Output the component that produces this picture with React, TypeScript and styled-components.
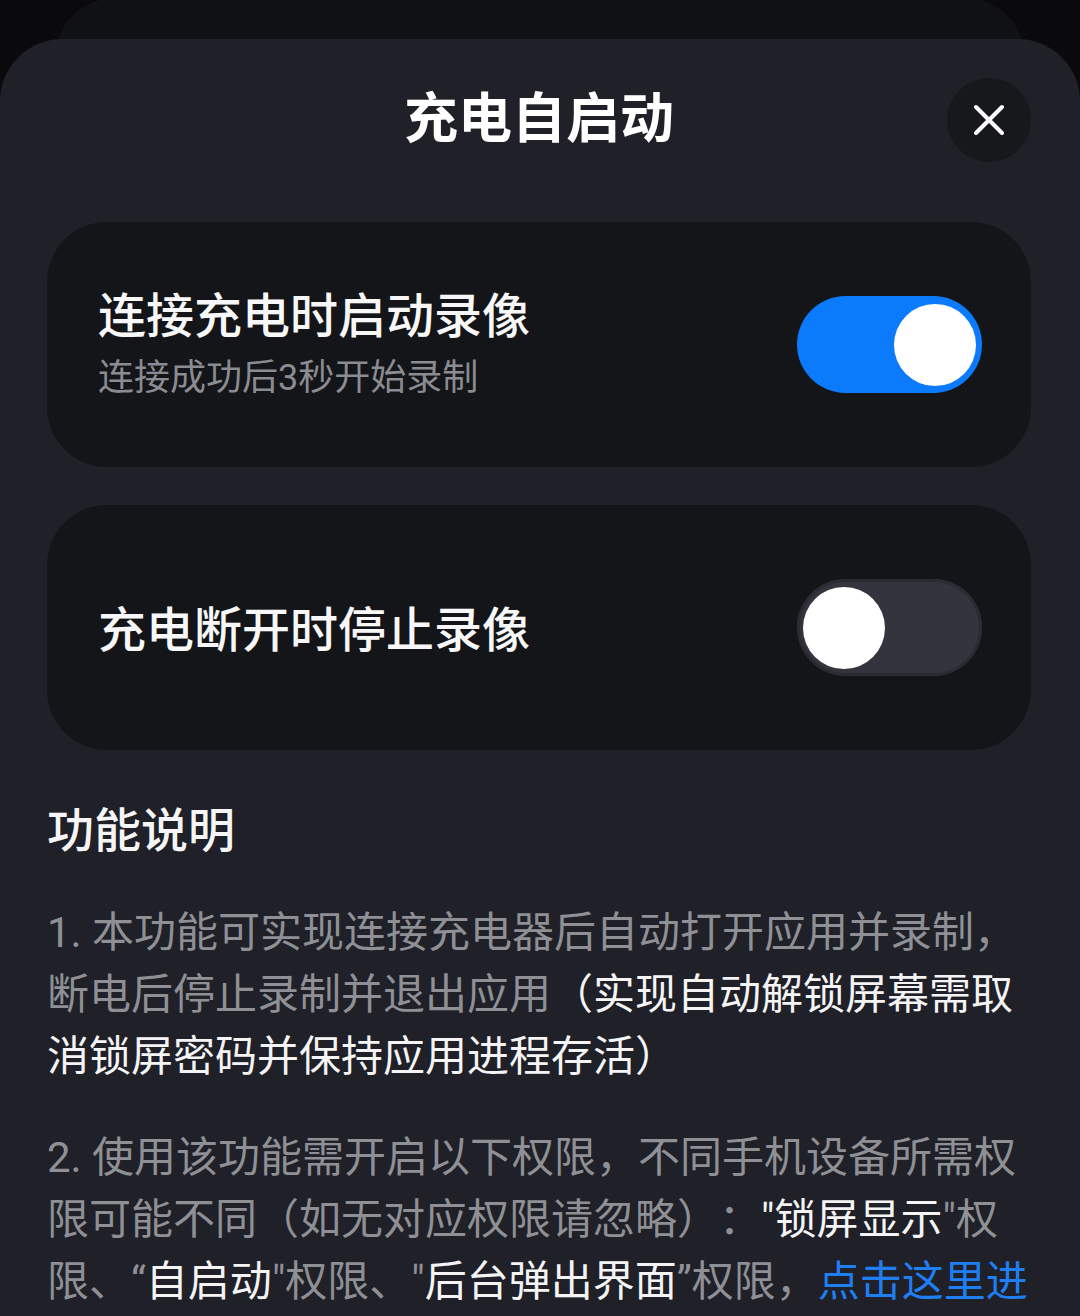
import React, { useState } from "react";
import styled, { createGlobalStyle } from "styled-components";

const GlobalStyle = createGlobalStyle`
  html, body {
    margin: 0;
    padding: 0;
    background: #0a0a0d;
  }
  body {
    font-family: Roboto, "Noto Sans CJK SC", sans-serif;
    -webkit-font-smoothing: antialiased;
    text-spacing-trim: space-all;
  }
  * { box-sizing: border-box; }
`;

const Page = styled.div`
  position: relative;
  width: 1080px;
  height: 1316px;
  overflow: hidden;
  background: #0a0a0d;
`;

const BackLayer = styled.div`
  position: absolute;
  top: -2px;
  left: 55px;
  right: 55px;
  height: 120px;
  border-radius: 62px;
  background: #101115;
`;

const Sheet = styled.section`
  position: relative;
  margin-top: 39px;
  min-height: 1277px;
  padding: 0 49px 0 47px;
  background: #1f2028;
  border-radius: 62px 62px 0 0;
`;

const Header = styled.header`
  display: grid;
  grid-template-columns: 1fr auto 1fr;
  align-items: center;
  height: 162px;
`;

const Title = styled.h1`
  grid-column: 2;
  margin: 0;
  font-size: 54px;
  font-weight: 700;
  color: #ffffff;
  line-height: 1;
`;

const CloseButton = styled.button`
  grid-column: 3;
  justify-self: end;
  width: 84px;
  height: 84px;
  border: none;
  border-radius: 50%;
  background: #17181c;
  display: flex;
  align-items: center;
  justify-content: center;
  padding: 0;
  cursor: pointer;
`;

const CardList = styled.div`
  display: flex;
  flex-direction: column;
  gap: 38px;
  margin-top: 21px;
`;

const Card = styled.div`
  display: flex;
  align-items: center;
  justify-content: space-between;
  height: 245px;
  padding: 0 49px 0 51px;
  background: #141519;
  border-radius: 60px;
`;

const CardText = styled.div`
  display: flex;
  flex-direction: column;
  padding-top: 6px;
`;

const CardTitle = styled.div`
  font-size: 48px;
  line-height: 60px;
  font-weight: 500;
  color: #f7f7f8;
`;

const CardSub = styled.div`
  font-size: 36px;
  line-height: 62px;
  font-weight: 400;
  color: #8b8c91;
`;

const Track = styled.button<{ $on: boolean }>`
  width: 185px;
  height: 97px;
  border-radius: 49px;
  border: none;
  padding: 0 6px;
  display: flex;
  align-items: center;
  justify-content: ${(p) => (p.$on ? "flex-end" : "flex-start")};
  background: ${(p) => (p.$on ? "#0b7bfb" : "#33343d")};
  box-shadow: ${(p) => (p.$on ? "none" : "inset 0 0 0 3px #2b2c33")};
  cursor: pointer;
`;

const Knob = styled.span`
  width: 82px;
  height: 82px;
  border-radius: 50%;
  background: #ffffff;
`;

const Section = styled.div`
  padding-top: 51px;
`;

const Heading = styled.h2`
  margin: 0;
  font-size: 47px;
  line-height: 60px;
  font-weight: 500;
  color: #f5f5f6;
`;

const Paragraphs = styled.div`
  display: flex;
  flex-direction: column;
  gap: 39px;
  margin-top: 41px;
`;

const Para = styled.p`
  margin: 0;
  font-size: 42px;
  line-height: 62px;
  font-weight: 400;
  color: #8f9095;
`;

const Hl = styled.span`
  color: #f4f4f5;
`;

const Link = styled.span`
  color: #1f7ff2;
`;

function Switch({ initial }: { initial: boolean }) {
  const [on, setOn] = useState(initial);
  return (
    <Track $on={on} onClick={() => setOn(!on)} aria-pressed={on}>
      <Knob />
    </Track>
  );
}

export default function App() {
  return (
    <>
      <GlobalStyle />
      <Page>
        <BackLayer />
        <Sheet>
          <Header>
            <Title>充电自启动</Title>
            <CloseButton aria-label="关闭">
              <svg width="32" height="32" viewBox="0 0 32 32">
                <path
                  d="M3 3 L29 29 M29 3 L3 29"
                  stroke="#ffffff"
                  strokeWidth="4"
                  strokeLinecap="round"
                  fill="none"
                />
              </svg>
            </CloseButton>
          </Header>

          <CardList>
            <Card>
              <CardText>
                <CardTitle>连接充电时启动录像</CardTitle>
                <CardSub>连接成功后3秒开始录制</CardSub>
              </CardText>
              <Switch initial={true} />
            </Card>
            <Card>
              <CardText>
                <CardTitle>充电断开时停止录像</CardTitle>
              </CardText>
              <Switch initial={false} />
            </Card>
          </CardList>

          <Section>
            <Heading>功能说明</Heading>
            <Paragraphs>
              <Para>
                1. 本功能可实现连接充电器后自动打开应用并录制，断电后停止录制并退出应用
                <Hl>（实现自动解锁屏幕需取消锁屏密码并保持应用进程存活）</Hl>
              </Para>
              <Para>
                2. 使用该功能需开启以下权限，不同手机设备所需权限可能不同（如无对应权限请忽略）：
                <Hl>"锁屏显示</Hl>"权限、“<Hl>自启动</Hl>"权限、"<Hl>后台弹出界面</Hl>”权限，
                <Link>点击这里进</Link>
              </Para>
            </Paragraphs>
          </Section>
        </Sheet>
      </Page>
    </>
  );
}
